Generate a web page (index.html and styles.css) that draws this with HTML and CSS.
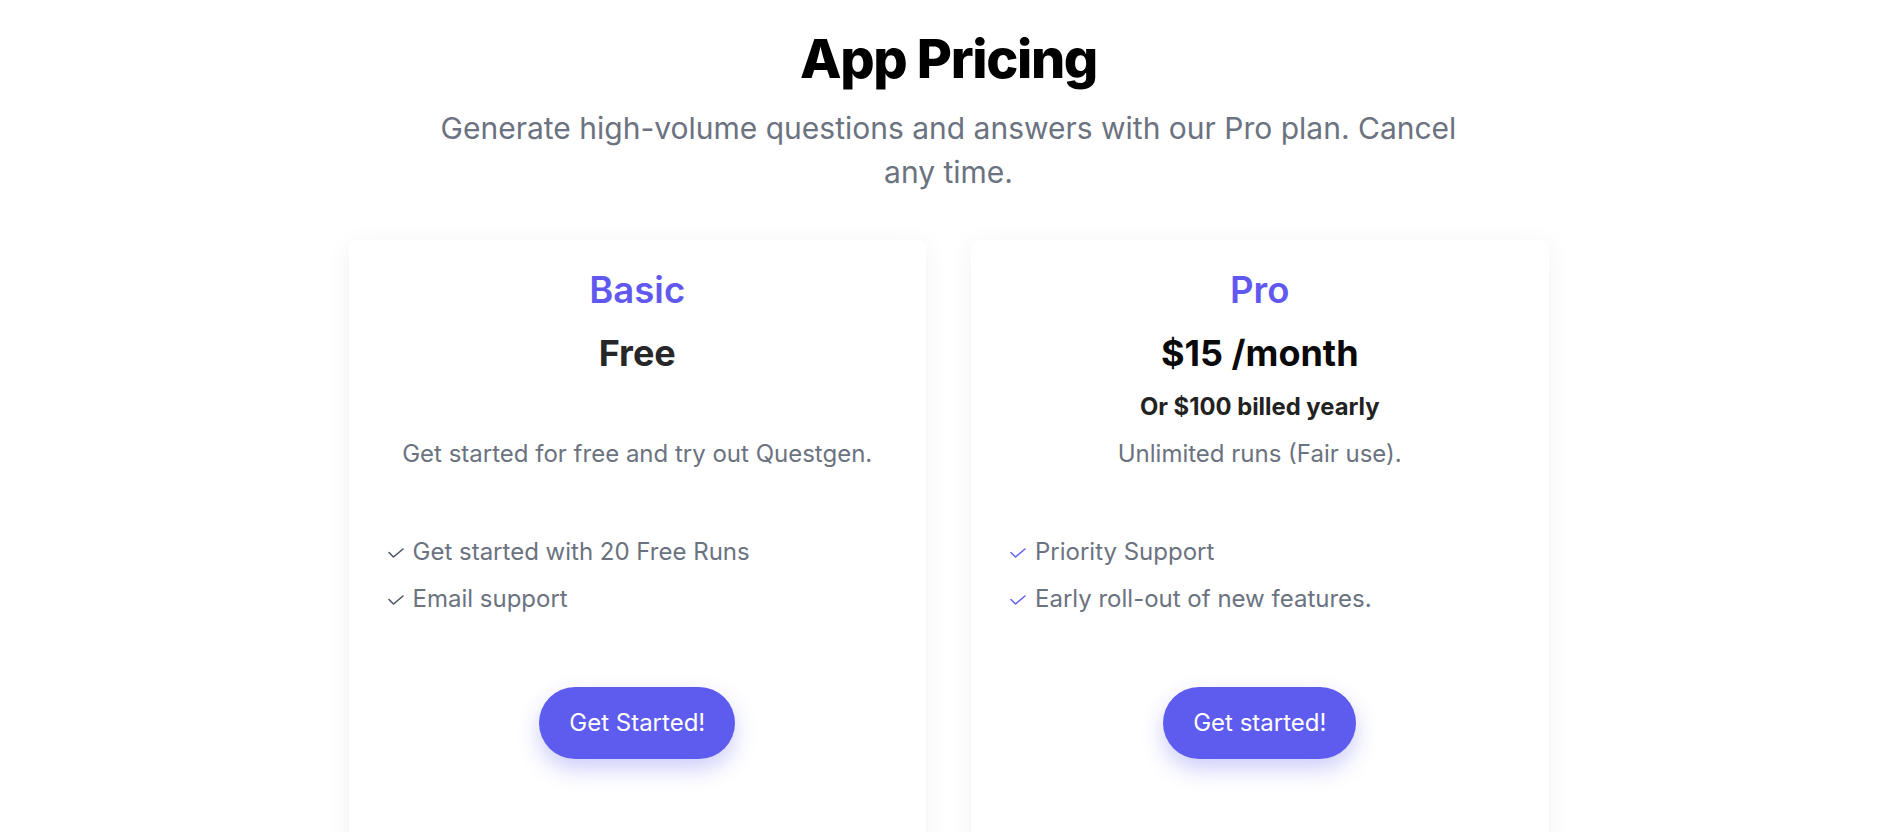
FILE: index.html
```html
<!DOCTYPE html>
<html lang="en">
<head>
<meta charset="utf-8">
<title>App Pricing</title>
<link rel="stylesheet" href="styles.css">
</head>
<body>
<main class="pricing">
  <header class="pricing-head">
    <h1 class="pricing-title">App Pricing</h1>
    <p class="pricing-sub">Generate high-volume questions and answers with our Pro plan. Cancel any time.</p>
  </header>
  <section class="plans">
    <article class="plan">
      <h2 class="plan-name">Basic</h2>
      <div class="plan-price plan-price-free">Free</div>
      <div class="plan-alt plan-alt-empty">&nbsp;</div>
      <p class="plan-desc">Get started for free and try out Questgen.</p>
      <ul class="plan-features">
        <li class="feature"><svg class="check check-gray" viewBox="0 0 16 10" width="16" height="10"><polyline points="1,4.5 5.5,9 15,1" fill="none" stroke="currentColor" stroke-width="1.6" stroke-linecap="round" stroke-linejoin="round"/></svg><span>Get started with 20 Free Runs</span></li>
        <li class="feature"><svg class="check check-gray" viewBox="0 0 16 10" width="16" height="10"><polyline points="1,4.5 5.5,9 15,1" fill="none" stroke="currentColor" stroke-width="1.6" stroke-linecap="round" stroke-linejoin="round"/></svg><span>Email support</span></li>
      </ul>
      <div class="plan-action"><a class="btn" href="#">Get Started!</a></div>
    </article>
    <article class="plan">
      <h2 class="plan-name">Pro</h2>
      <div class="plan-price">$15 /month</div>
      <div class="plan-alt">Or $100 billed yearly</div>
      <p class="plan-desc">Unlimited runs (Fair use).</p>
      <ul class="plan-features">
        <li class="feature"><svg class="check check-indigo" viewBox="0 0 16 10" width="16" height="10"><polyline points="1,4.5 5.5,9 15,1" fill="none" stroke="currentColor" stroke-width="1.6" stroke-linecap="round" stroke-linejoin="round"/></svg><span>Priority Support</span></li>
        <li class="feature"><svg class="check check-indigo" viewBox="0 0 16 10" width="16" height="10"><polyline points="1,4.5 5.5,9 15,1" fill="none" stroke="currentColor" stroke-width="1.6" stroke-linecap="round" stroke-linejoin="round"/></svg><span>Early roll-out of new features.</span></li>
      </ul>
      <div class="plan-action"><a class="btn" href="#">Get started!</a></div>
    </article>
  </section>
</main>
</body>
</html>
```

FILE: styles.css
```css
* {
  box-sizing: border-box;
}

html, body {
  margin: 0;
  padding: 0;
  background: #ffffff;
}

body {
  font-family: Inter, "Noto Sans", "Liberation Sans", sans-serif;
  color: #111827;
}

.pricing {
  padding-top: 27px;
}

.pricing-head {
  text-align: center;
}

.pricing-title {
  margin: 0;
  font-size: 54px;
  line-height: 64px;
  font-weight: 800;
  letter-spacing: -0.025em;
  color: #000000;
}

.pricing-sub {
  margin: 16px auto 0;
  max-width: 1040px;
  font-size: 30px;
  line-height: 43.5px;
  font-weight: 400;
  color: #6b7280;
}

.plans {
  max-width: 1200px;
  margin: 46px auto 0;
  display: grid;
  grid-template-columns: 1fr 1fr;
  gap: 45px;
}

.plan {
  background: #ffffff;
  border-radius: 8px;
  box-shadow: 0 4px 26px rgba(0, 0, 0, 0.06);
  padding: 28px 39px 120px;
  text-align: center;
}

.plan-name {
  margin: 0;
  font-size: 36.5px;
  line-height: 44px;
  font-weight: 600;
  color: #6159ef;
}

.plan-price {
  margin-top: 19px;
  font-size: 36px;
  line-height: 44px;
  font-weight: 700;
  color: #0a0a0a;
}

.plan-price-free {
  color: #27272a;
}

.plan-alt {
  margin-top: 15px;
  font-size: 23.8px;
  line-height: 33px;
  font-weight: 700;
  color: #222222;
}

.plan-alt-empty {
  visibility: hidden;
}

.plan-desc {
  margin: 14px 0 0;
  font-size: 24px;
  line-height: 34.5px;
  color: #6b7280;
}

.plan-features {
  list-style: none;
  margin: 62px 0 0;
  padding: 0;
  display: flex;
  flex-direction: column;
  gap: 11px;
  text-align: left;
}

.feature {
  display: flex;
  align-items: center;
  gap: 9px;
  font-size: 24px;
  line-height: 36px;
  color: #6b7280;
}

.check {
  flex: none;
  margin-top: 2px;
}

.check-gray {
  color: #4b5563;
}

.check-indigo {
  color: #6366f1;
}

.plan-action {
  margin-top: 70px;
  display: flex;
  justify-content: center;
}

.btn {
  display: inline-block;
  padding: 18px 30px;
  border-radius: 9999px;
  background: #5e5cee;
  color: #ffffff;
  font-size: 24px;
  line-height: 36px;
  font-weight: 400;
  text-decoration: none;
  box-shadow: 0 10px 22px rgba(99, 102, 241, 0.32);
}
```
